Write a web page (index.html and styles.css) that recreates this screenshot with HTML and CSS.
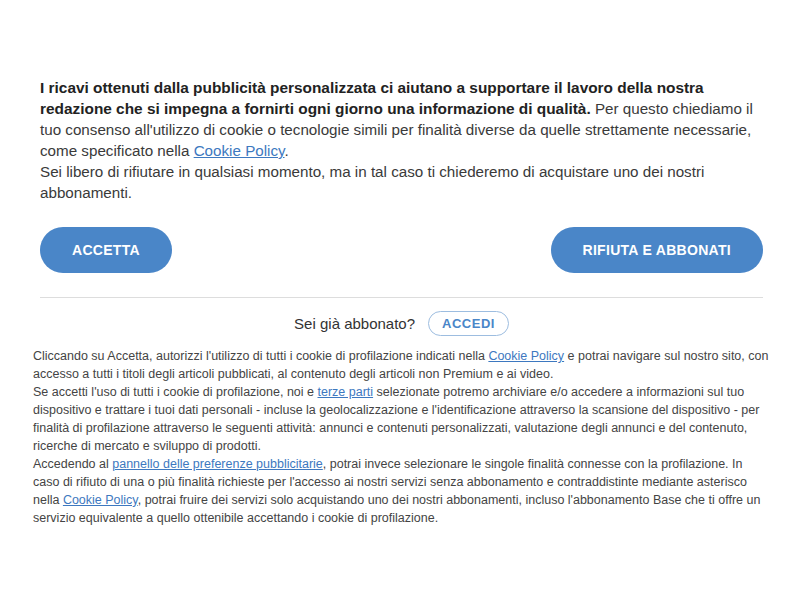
FILE: index.html
```html
<!DOCTYPE html>
<html>
<head>
	<title>Consenso cookie</title>
	<link rel="stylesheet" href="styles.css">
</head>
<body>
	<div class="banner">
		<p class="intro">
			<b>I ricavi ottenuti dalla pubblicità personalizzata ci aiutano a supportare il lavoro della nostra redazione che si impegna a fornirti ogni giorno una informazione di qualità.</b> Per questo chiediamo il tuo consenso all'utilizzo di cookie o tecnologie simili per finalità diverse da quelle strettamente necessarie, come specificato nella <a href="#">Cookie Policy</a>.<br>
			Sei libero di rifiutare in qualsiasi momento, ma in tal caso ti chiederemo di acquistare uno dei nostri abbonamenti.
		</p>
		<div class="actions">
			<button type="button" class="btn">ACCETTA</button>
			<button type="button" class="btn">RIFIUTA E ABBONATI</button>
		</div>
		<div class="login">
			<span>Sei già abbonato?</span>
			<button type="button" class="btn-outline">ACCEDI</button>
		</div>
	</div>
	<p class="notes">
		Cliccando su Accetta, autorizzi l'utilizzo di tutti i cookie di profilazione indicati nella <a href="#">Cookie Policy</a> e potrai navigare sul nostro sito, con accesso a tutti i titoli degli articoli pubblicati, al contenuto degli articoli non Premium e ai video.<br>
		Se accetti l'uso di tutti i cookie di profilazione, noi e <a href="#">terze parti</a> selezionate potremo archiviare e/o accedere a informazioni sul tuo dispositivo e trattare i tuoi dati personali - incluse la geolocalizzazione e l'identificazione attraverso la scansione del dispositivo - per finalità di profilazione attraverso le seguenti attività: annunci e contenuti personalizzati, valutazione degli annunci e del contenuto, ricerche di mercato e sviluppo di prodotti.<br>
		Accedendo al <a href="#">pannello delle preferenze pubblicitarie</a>, potrai invece selezionare le singole finalità connesse con la profilazione. In caso di rifiuto di una o più finalità richieste per l'accesso ai nostri servizi senza abbonamento e contraddistinte mediante asterisco nella <a href="#">Cookie Policy</a>, potrai fruire dei servizi solo acquistando uno dei nostri abbonamenti, incluso l'abbonamento Base che ti offre un servizio equivalente a quello ottenibile accettando i cookie di profilazione.
	</p>
</body>
</html>
```

FILE: styles.css
```css
body {
	margin: 0;
	background-color: #fff;
	font-family: "Liberation Sans", Arial, sans-serif;
	color: #333;
}
a {
	color: #3d78c0;
	text-decoration: underline;
}
.banner {
	width: 723px;
	margin: 0 0 0 40px;
	padding-top: 77px;
}
.intro {
	margin: 0;
	font-size: 15.2px;
	line-height: 21px;
	color: #3a3a3a;
}
.intro b {
	font-size: 15.4px;
	color: #222;
}
.actions {
	display: flex;
	justify-content: space-between;
	margin-top: 24px;
	padding-bottom: 24px;
	border-bottom: 1px solid #ddd;
}
.btn {
	height: 46px;
	padding: 0 32px;
	border: none;
	border-radius: 23px;
	background-color: #4a86c8;
	color: #fff;
	font-family: inherit;
	font-size: 14px;
	font-weight: bold;
	letter-spacing: 0.3px;
}
.login {
	display: flex;
	justify-content: center;
	align-items: center;
	gap: 13px;
	margin-top: 13px;
	font-size: 15px;
	color: #333;
}
.btn-outline {
	height: 25px;
	padding: 0 13px;
	border: 1px solid #9dbde0;
	border-radius: 13px;
	background-color: #fff;
	color: #4a86c8;
	font-family: inherit;
	font-size: 13px;
	font-weight: bold;
	letter-spacing: 0.5px;
}
.notes {
	width: 736px;
	margin: 11px 0 0 33px;
	font-size: 12.5px;
	line-height: 18px;
	color: #444;
}
```
